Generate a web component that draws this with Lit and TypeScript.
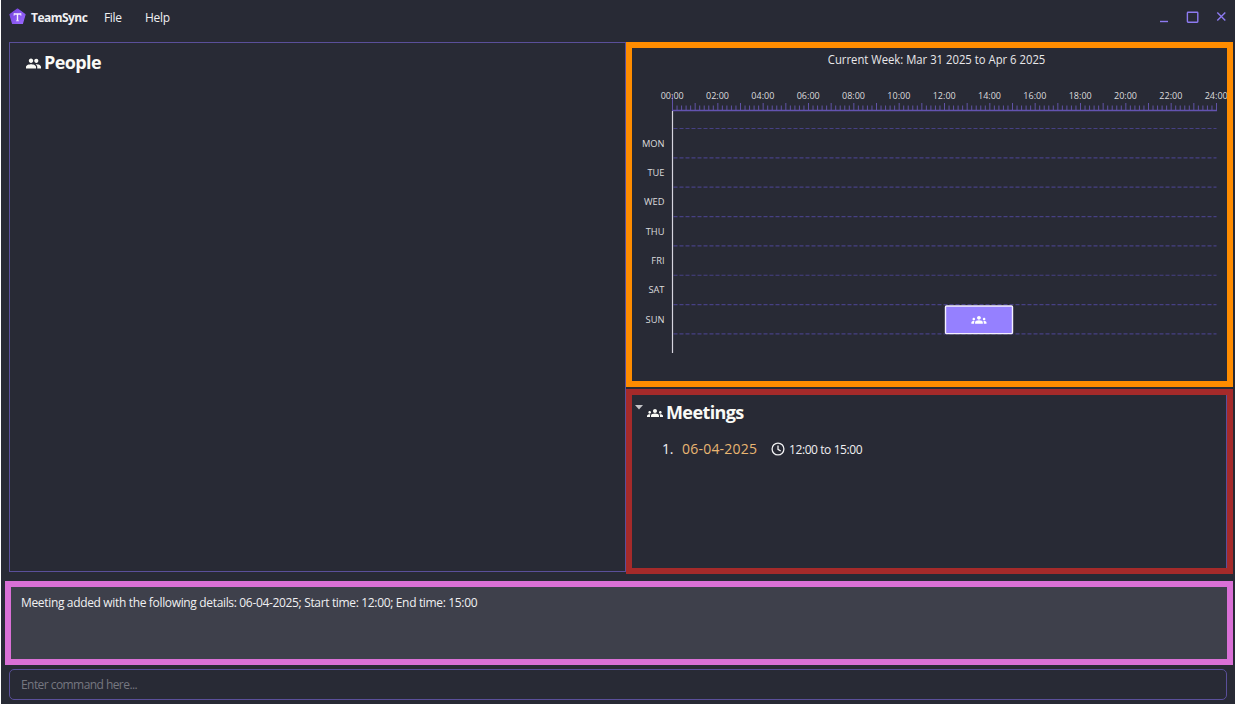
import { LitElement, html, svg, css } from "lit";
import { customElement } from "lit/decorators.js";

const groups = svg`<path d="M12 12.75c1.63 0 3.07.39 4.24.9 1.08.48 1.76 1.56 1.76 2.73V18H6v-1.61c0-1.18.68-2.26 1.76-2.73 1.17-.52 2.61-.91 4.24-.91zM4 13c1.1 0 2-.9 2-2s-.9-2-2-2-2 .9-2 2 .9 2 2 2zm1.13 1.1C4.76 14.04 4.39 14 4 14c-.99 0-1.93.21-2.78.58C.48 14.9 0 15.62 0 16.43V18h4.5v-1.61c0-.83.23-1.61.63-2.29zM20 13c1.1 0 2-.9 2-2s-.9-2-2-2-2 .9-2 2 .9 2 2 2zm4 3.43c0-.81-.48-1.53-1.22-1.85-.85-.37-1.79-.58-2.78-.58-.39 0-.76.04-1.13.1.4.68.63 1.46.63 2.29V18H24v-1.57zM12 6c1.66 0 3 1.34 3 3s-1.34 3-3 3-3-1.34-3-3 1.34-3 3-3z"/>`;

const X0 = 40.5;
const HOUR = 544 / 24;
const ROW = 29.35;
const ROW0 = 80.5;
const DAYS = ["MON", "TUE", "WED", "THU", "FRI", "SAT", "SUN"];

@customElement("week-chart")
class WeekChart extends LitElement {
  static styles = css`
    :host { display: block; height: 333px; }
    svg { display: block; }
    text { font-family: "Open Sans", "Noto Sans", sans-serif; fill: #dcdcde; }
    .title { font-size: 12px; fill: #e8e8ea; }
    .label { font-size: 9px; }
    .day { font-size: 9.3px; }
    .grid { stroke: #464084; stroke-width: 1.2; stroke-dasharray: 4 2; }
    .tick { stroke: #6052a6; }
    .axis { stroke: #6353b0; stroke-width: 1.3; }
    .day-axis { stroke: #d6d4de; stroke-width: 1.2; }
    .event { fill: #9580ff; stroke: #f4f0ff; stroke-width: 1.4; }
  `;
  render() {
    const ticks = Array.from({ length: 121 }, (_, i) => i);
    const rows = Array.from({ length: 8 }, (_, i) => i);
    const hours = Array.from({ length: 13 }, (_, i) => i * 2);
    return html`<svg width="595" height="333" viewBox="0 0 595 333">
      <text class="title" x="195.8" y="16" textLength="217.5" lengthAdjust="spacingAndGlyphs">Current Week: Mar 31 2025 to Apr 6 2025</text>
      <line class="tick" x1="40.5" x2="40.5" y1="47" y2="62" />
      ${hours.map((h) => svg`<text class="label" x=${X0 + h * HOUR - 11.8} y="51" textLength="23" lengthAdjust="spacingAndGlyphs">${String(h).padStart(2, "0")}:00</text>`)}
      ${ticks.map((i) => svg`<line class="tick" x1=${X0 + (i * HOUR) / 5} x2=${X0 + (i * HOUR) / 5} y1=${i % 5 ? 57.5 : 55} y2="62" />`)}
      ${rows.map((i) => svg`<line class="grid" x1="41.5" x2="584.5" y1=${ROW0 + i * ROW} y2=${ROW0 + i * ROW} />`)}
      <line class="axis" x1="40" x2="585" y1="62.5" y2="62.5" />
      <line class="day-axis" x1="40.5" x2="40.5" y1="63" y2="305" />
      ${DAYS.map((d, i) => svg`<text class="day" x="32.5" y=${98.7 + i * 29.3} text-anchor="end">${d}</text>`)}
      <rect class="event" x="313.5" y="258" width="67" height="27.6" rx="1" />
      <svg x="339.2" y="264" width="15.5" height="15.5" viewBox="0 0 24 24" fill="#fff">${groups}</svg>
    </svg>`;
  }
}

@customElement("app-root")
class AppRoot extends LitElement {
  static styles = css`
    :host { display: block; }
    * { box-sizing: border-box; }
    svg { display: block; flex: none; }
    .window { width: 1236px; height: 704px; background: #282a35; border: solid #fff; border-width: 0 1px; display: flex; flex-direction: column; overflow: hidden; font-family: "Open Sans", "Noto Sans", sans-serif; color: #f0f0f2; font-size: 12px; white-space: nowrap; }
    .bar { height: 42px; display: flex; align-items: flex-start; padding: 8px 7px 0 8px; line-height: 20px; }
    .brand { font-weight: 700; margin-left: 5px; width: 73px; letter-spacing: -.53px; }
    .file { width: 41px; letter-spacing: -.35px; }
    .help { letter-spacing: -.3px; }
    .controls { margin-left: auto; }
    .main { display: flex; height: 532px; padding-left: 8px; }
    .people { width: 617px; height: 530px; border: 1px solid #5a4f9a; padding: 8px 16px; }
    .head { display: flex; align-items: center; height: 24px; font-size: 18px; font-weight: 700; color: #fafaf6; }
    .head span { margin-left: 3px; }
    .people-title { letter-spacing: -.6px; line-height: 22px; height: 24px; }
    .meet-title { letter-spacing: -.6px; }
    .side { width: 607px; display: flex; flex-direction: column; gap: 2px; }
    .week { border: 6px solid #ff8c00; height: 345px; }
    .meetings { border: 6px solid #a52a2a; height: 185px; }
    .inner { height: 173px; border-right: 1px solid #5a4f9a; padding: 6px 0 0 3px; }
    .inner .head { align-items: flex-start; line-height: 22px; }
    .tri { margin-top: 4px; }
    .meet-icon { margin: 4px 0 0 4px; }
    .row { display: flex; align-items: center; height: 24px; margin-top: 12px; padding-left: 27px; }
    .num { width: 20px; font-size: 14px; letter-spacing: -.2px; line-height: 24px; }
    .date { width: 89px; font-size: 14px; color: #e8b672; letter-spacing: .22px; line-height: 24px; }
    .time { margin-left: 4px; letter-spacing: -.41px; }
    .result { margin: 7px 0 0 4px; width: 1228px; height: 84px; border: 6px solid #da70d6; background: #3e404b; padding: 6px 10px; line-height: 19px; letter-spacing: -.34px; }
    .command { margin: 4px 0 0 8px; width: 1218px; height: 31px; border: 1px solid #5a4f9a; border-radius: 5px; padding: 0 11px; line-height: 29px; letter-spacing: -.56px; color: #767780; }
  `;
  render() {
    return html`<div class="window">
      <div class="bar">
        <svg width="17" height="17" viewBox="0 0 17 17">
          <defs><linearGradient id="g" x1="0" y1="0" x2="1" y2="1"><stop offset="0" stop-color="#7442dc" /><stop offset="1" stop-color="#9a68ff" /></linearGradient></defs>
          <path d="M8.5 1 16 6.5 13.4 15.5H3.6L1 6.5Z" fill="url(#g)" stroke="url(#g)" stroke-width="1.2" stroke-linejoin="round" />
          <path d="M4.9 6H12.1M8.500 6V12.800" stroke="#f5f0ff" stroke-width="1.4" fill="none" />
          <path d="M5.100 5.400V7.900M11.900 5.400V7.900M7 12.800H10" stroke="#f5f0ff" stroke-width=".7" />
        </svg>
        <span class="brand">TeamSync</span><span class="file">File</span><span class="help">Help</span>
        <svg class="controls" width="70" height="20" viewBox="0 0 70 20" fill="none" stroke="#8d7af0" stroke-width="1.4">
          <path d="M2 13.500H10" /><rect x="29.400" y="4.200" width="10.400" height="10" rx=".7" /><path d="M59.300 4.500 67.300 12.500M67.300 4.500 59.300 12.500" />
        </svg>
      </div>
      <div class="main">
        <section class="people">
          <div class="head">
            <svg width="15" height="15" viewBox="0 0 24 24" fill="#fafaf6"><path d="M16.500 11c1.900 0 3.300-1.500 3.300-3.300S18.400 4.400 16.500 4.400 13.200 5.900 13.200 7.700 14.700 11 16.500 11zM8 11c2 0 3.500-1.600 3.500-3.500S10 4 8 4 4.500 5.600 4.500 7.500 6 11 8 11zm0 2.300c-2.700 0-8 1.300-8 4V20h16v-2.700c0-2.700-5.300-4-8-4zm8.500 0-1 .1c1.500 1 2.500 2.200 2.500 3.900V20h6v-2.700c0-2.700-4.900-4-7.500-4z" /></svg>
            <span class="people-title">People</span>
          </div>
        </section>
        <div class="side">
          <section class="week"><week-chart></week-chart></section>
          <section class="meetings"><div class="inner">
            <div class="head">
              <svg class="tri" width="8" height="5" viewBox="0 0 8 5"><path d="M0 0H8L4 4.500Z" fill="#c4c4c8" /></svg>
              <svg class="meet-icon" width="16" height="16" viewBox="0 0 24 24" fill="#fafaf6">${groups}</svg>
              <span class="meet-title">Meetings</span>
            </div>
            <div class="row">
              <span class="num">1.</span><span class="date">06-04-2025</span>
              <svg width="14" height="14" viewBox="0 0 14 14" fill="none" stroke="#f0f0f2" stroke-width="1.3"><circle cx="7" cy="7" r="5.900" /><path d="M7 3.500V7.300L9.700 9" /></svg>
              <span class="time">12:00 to 15:00</span>
            </div>
          </div></section>
        </div>
      </div>
      <div class="result">Meeting added with the following details: 06-04-2025; Start time: 12:00; End time: 15:00</div>
      <div class="command">Enter command here...</div>
    </div>`;
  }
}
